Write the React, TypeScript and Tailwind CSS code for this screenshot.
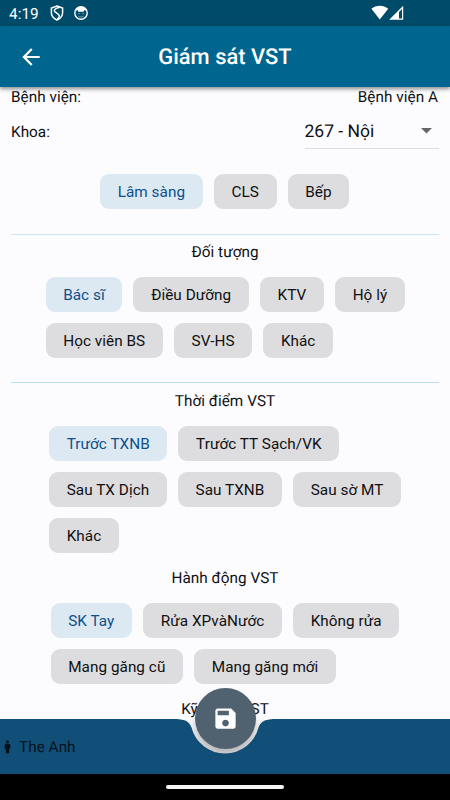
import clsx from "clsx";

type Group = { title?: string; rows: string[][]; className: string };

const GROUPS: Record<string, Group> = {
  area: { rows: [["Lâm sàng", "CLS", "Bếp"]], className: "pl-[100px]" },
  subject: {
    title: "Đối tượng",
    rows: [
      ["Bác sĩ", "Điều Dưỡng", "KTV", "Hộ lý"],
      ["Học viên BS", "SV-HS", "Khác"],
    ],
    className: "pl-[45.5px]",
  },
  moment: {
    title: "Thời điểm VST",
    rows: [
      ["Trước TXNB", "Trước TT Sạch/VK"],
      ["Sau TX Dịch", "Sau TXNB", "Sau sờ MT"],
      ["Khác"],
    ],
    className: "pl-[49px]",
  },
  action: {
    title: "Hành động VST",
    rows: [
      ["SK Tay", "Rửa XPvàNước", "Không rửa"],
      ["Mang găng cũ", "Mang găng mới"],
    ],
    className: "pl-[50.5px]",
  },
};

function Chip({ label, selected }: { label: string; selected: boolean }) {
  return (
    <button
      className={clsx(
        "h-[35px] shrink-0 whitespace-nowrap rounded-[9px] px-[17.7px] leading-[36px]",
        selected ? "bg-[#dce9f2] text-[#0e4f8a]" : "bg-[#dddddf] text-[#101012]"
      )}
    >
      {label}
    </button>
  );
}

function ChipGroup({ group }: { group: Group }) {
  return (
    <div className={clsx("flex flex-col gap-[11px]", group.className)}>
      {group.rows.map((row, r) => (
        <div key={r} className="flex gap-[11px]">
          {row.map((label, i) => (
            <Chip key={label} label={label} selected={r === 0 && i === 0} />
          ))}
        </div>
      ))}
    </div>
  );
}

function Heading({ children }: { children: string }) {
  return <h2 className="h-5 text-center leading-5">{children}</h2>;
}

function StatusBar() {
  return (
    <div className="flex h-[26px] shrink-0 items-center bg-[#004b69] pl-[9px] text-white">
      <span className="w-[41px] pt-px text-[15.3px] leading-[26px]">4:19</span>
      <svg className="h-4 w-[14px]" viewBox="0 0 14 16" fill="none" stroke="currentColor" strokeWidth="1.5">
        <path d="M7 1 12.6 3v4.8c0 3.2-2.2 5.8-5.6 7.2-3.4-1.4-5.6-4-5.6-7.2V3z" />
        <path d="M9.6 2.2C5.8 3.2 3.6 4.7 4.6 6.3c.8 1.3 4.6 2.7 4.8 4.6.1 1.2-1 2.4-2 3.3" />
      </svg>
      <svg className="ml-[10px] h-[14px] w-[14px]" viewBox="0 0 14 14" fill="none">
        <circle cx="7" cy="7" r="6.2" stroke="currentColor" strokeWidth="1.4" />
        <path d="M1.2 5C2 2.4 4.2.8 7 .8s5 1.6 5.8 4.2L10.4 4 9.7 5.7H4.3L3.6 4z" fill="currentColor" />
        <path d="M4.1 7.6h1.6M8.3 7.6h1.6M4.3 10.2c1.6 1.1 3.8 1.1 5.4 0" stroke="currentColor" strokeWidth=".8" opacity=".6" />
      </svg>
      <svg className="ml-auto h-4 w-[34px]" viewBox="0 0 34 16" fill="currentColor">
        <path d="M.4 3.7C5-.3 12.6-.3 17.2 3.7L8.8 14.4z" />
        <path fillRule="evenodd" d="M18.2 14.8 32.2.8v14zM28 7v6.4h3V4z" />
      </svg>
      <div className="w-[45px]" />
    </div>
  );
}

function AppBar() {
  return (
    <header className="relative z-10 flex h-[61px] shrink-0 items-center justify-center bg-[#00658f] text-white shadow-[0_2px_4px_rgba(0,0,0,0.45)]">
      <svg className="absolute left-[18px] top-[18px] h-[26px] w-[26px]" viewBox="0 0 24 24" fill="currentColor">
        <path d="M20 11H7.83l5.59-5.59L12 4l-8 8 8 8 1.41-1.41L7.83 13H20z" />
      </svg>
      <h1 className="pt-[2px] text-[21.9px] font-medium leading-[60px] tracking-normal">Giám sát VST</h1>
    </header>
  );
}

function BottomBar() {
  return (
    <footer className="relative flex h-[55px] shrink-0 items-center bg-[#124f78] text-[#06121c]">
      <svg className="ml-[4px] h-[14px] w-[7px]" viewBox="0 0 7 14" fill="currentColor">
        <circle cx="3.5" cy="1.7" r="1.5" />
        <path d="M2 3.8h3C6 3.8 6.3 4.5 6.3 5.2v3.5H5.2v4.6H1.8V8.7H.7V5.2c0-.7.3-1.4 1.3-1.4z" />
      </svg>
      <span className="ml-[8px] pt-px">The Anh</span>
      <svg className="absolute left-[165px] top-0 h-[40px] w-[120px]" viewBox="0 0 120 40">
        <defs>
          <linearGradient id="notch" x1="0" y1="0" x2="0" y2="1">
            <stop offset="0" stopColor="#fafafd" />
            <stop offset=".4" stopColor="#e4e4e7" />
            <stop offset="1" stopColor="#d2d2d5" />
          </linearGradient>
        </defs>
        <path d="M8 0C20 0 24 2 26.5 8.5A34.6 34.6 0 0 0 93.5 8.5C96 2 100 0 112 0z" fill="url(#notch)" />
      </svg>
      <button
        aria-label="Lưu"
        className="absolute left-[194.5px] top-[-31px] flex h-[61px] w-[61px] items-center justify-center rounded-full bg-[#50616f] text-white shadow-[0_3px_5px_rgba(0,0,0,0.15)]"
      >
        <svg className="h-[27px] w-[27px]" viewBox="0 0 24 24" fill="currentColor">
          <path d="M17 3H5c-1.11 0-2 .9-2 2v14c0 1.1.89 2 2 2h14c1.1 0 2-.9 2-2V7l-4-4zm-5 16c-1.66 0-3-1.34-3-3s1.34-3 3-3 3 1.34 3 3-1.34 3-3 3zm3-10H5V5h10v4z" />
        </svg>
      </button>
    </footer>
  );
}

export default function App() {
  return (
    <div className="flex h-[800px] w-[450px] flex-col overflow-hidden bg-[#fcfcff] font-['Roboto',sans-serif] text-[15.3px] tracking-[0.04px] text-[#101012] [text-rendering:geometricPrecision]">
      <StatusBar />
      <AppBar />
      <main className="flex h-[632px] shrink-0 flex-col overflow-hidden">
        <div className="flex h-5 shrink-0 justify-between pl-[11px] pr-[12px] leading-5">
          <span>Bệnh viện:</span>
          <span>Bệnh viện A</span>
        </div>
        <div className="mt-[7px] flex h-[35px] shrink-0 justify-between px-[11px] leading-[36px]">
          <span>Khoa:</span>
          <div className="flex w-[134.5px] items-center justify-between border-b border-[#dddddf] text-[17.5px] tracking-normal">
            <span className="pt-px">267 - Nội</span>
            <svg className="mr-[7px] h-[6px] w-[11px]" viewBox="0 0 11 6" fill="#66666a">
              <path d="M0 0h11L5.5 5.5z" />
            </svg>
          </div>
        </div>
        <div className="mt-[25px]">
          <ChipGroup group={GROUPS.area} />
        </div>
        <hr className="mx-[11px] mt-[24.5px] border-[#cae4fa]" />
        <div className="mt-[7px]">
          <Heading>{GROUPS.subject.title!}</Heading>
        </div>
        <div className="mt-[15px]">
          <ChipGroup group={GROUPS.subject} />
        </div>
        <hr className="mx-[11px] mt-[24px] border-[#b8defa]" />
        <div className="mt-[8px]">
          <Heading>{GROUPS.moment.title!}</Heading>
        </div>
        <div className="mt-[15px]">
          <ChipGroup group={GROUPS.moment} />
        </div>
        <div className="mt-[15px]">
          <Heading>{GROUPS.action.title!}</Heading>
        </div>
        <div className="mt-[15px]">
          <ChipGroup group={GROUPS.action} />
        </div>
        <div className="mt-[15px]">
          <Heading>Kỹ thuật VST</Heading>
        </div>
      </main>
      <BottomBar />
      <div className="flex h-[26px] shrink-0 items-center justify-center bg-black">
        <div className="h-[4.5px] w-[118px] rounded-full bg-[#f4f4f4]" />
      </div>
    </div>
  );
}
